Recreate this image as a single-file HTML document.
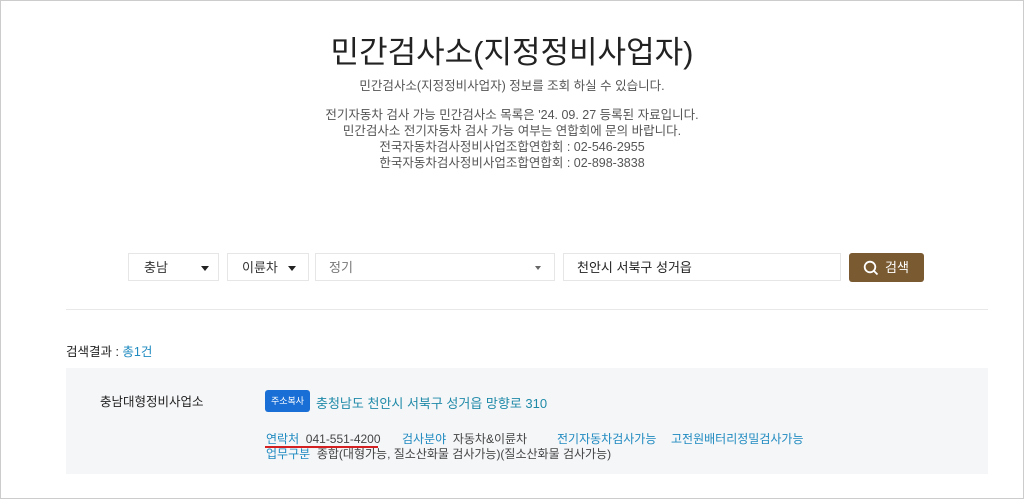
<!DOCTYPE html><html><head><meta charset="utf-8"><style>
body{margin:0;width:1024px;height:499px;overflow:hidden;background:#fff;font-family:"Liberation Sans","Noto Sans CJK KR",sans-serif;color:#333}
.frame{position:absolute;left:0;top:0;width:1022px;height:497px;border:1px solid #ccc}
.a{position:absolute;white-space:nowrap}
.c{left:0;width:1024px;text-align:center}
.box{position:absolute;top:253px;height:28px;border:1px solid #e6e6e6;background:#fff;font-size:13px;line-height:28px;box-sizing:border-box}
.tri{position:absolute;top:12px;width:0;height:0;border-left:4px solid transparent;border-right:4px solid transparent;border-top:5px solid #222}
.bl{color:#1f8ac0}
</style></head><body><div class="frame"></div>
<div class="a c" style="top:27px;font-size:31px;color:#222">민간검사소(지정정비사업자)</div>
<div class="a c" style="top:75px;font-size:12.5px;color:#555">민간검사소(지정정비사업자) 정보를 조회 하실 수 있습니다.</div>
<div class="a c" style="top:107px;font-size:12.5px;color:#555;line-height:16px;white-space:normal">전기자동차 검사 가능 민간검사소 목록은 '24. 09. 27 등록된 자료입니다.<br>민간검사소 전기자동차 검사 가능 여부는 연합회에 문의 바랍니다.<br>전국자동차검사정비사업조합연합회 : 02-546-2955<br>한국자동차검사정비사업조합연합회 : 02-898-3838</div>
<div class="box" style="left:128px;width:91px;padding-left:15px">충남<span class="tri" style="left:72px"></span></div>
<div class="box" style="left:227px;width:82px;padding-left:14px">이륜차<span class="tri" style="left:60px"></span></div>
<div class="box" style="left:315px;width:240px;padding-left:13px;color:#777">정기<span class="tri" style="left:219px;border-top-color:#666;border-left-width:3px;border-right-width:3px;border-top-width:4px"></span></div>
<div class="box" style="left:563px;width:278px;padding-left:13px;color:#222">천안시 서북구 성거읍</div>
<div class="a" style="left:849px;top:253px;width:75px;height:29px;background:#7a5a30;border-radius:3px;color:#fff;font-size:13px;line-height:29px">
<svg style="position:absolute;left:14px;top:7px" width="16" height="16" viewBox="0 0 16 16"><circle cx="7" cy="7" r="5.3" fill="none" stroke="#fff" stroke-width="1.8"/><path d="M11 11l3.5 3.5" stroke="#fff" stroke-width="1.8"/></svg>
<span style="position:absolute;left:36px">검색</span></div>
<div class="a" style="left:66px;top:309px;width:922px;height:1px;background:#e8e8e8"></div>
<div class="a" style="left:66px;top:341px;font-size:12.5px;color:#222">검색결과 : <span class="bl">총1건</span></div>
<div class="a" style="left:66px;top:368px;width:922px;height:106px;background:#f5f6f8"></div>
<div class="a" style="left:100px;top:391px;font-size:12.5px;color:#222">충남대형정비사업소</div>
<div class="a" style="left:265px;top:390px;width:45px;height:22px;background:#1a6fd6;border-radius:3px;color:#fff;font-size:9px;line-height:22px;text-align:center">주소복사</div>
<div class="a" style="left:316px;top:393px;font-size:13px;color:#1f8aa8">충청남도 천안시 서북구 성거읍 망향로 310</div>
<div class="a" style="left:266px;top:430px;font-size:12px;color:#444"><span class="bl">연락처</span>&nbsp; 041-551-4200</div>
<div class="a" style="left:402px;top:430px;font-size:12px;color:#444"><span class="bl">검사분야</span>&nbsp; 자동차&amp;이륜차</div>
<div class="a bl" style="left:557px;top:430px;font-size:12px">전기자동차검사가능</div>
<div class="a bl" style="left:671px;top:430px;font-size:12px">고전원배터리정밀검사가능</div>
<div class="a" style="left:265px;top:446px;width:113px;height:2px;background:#d42020"></div>
<div class="a" style="left:266px;top:445px;font-size:12px;color:#444"><span class="bl">업무구분</span>&nbsp; 종합(대형가능, 질소산화물 검사가능)(질소산화물 검사가능)</div>
</body></html>
